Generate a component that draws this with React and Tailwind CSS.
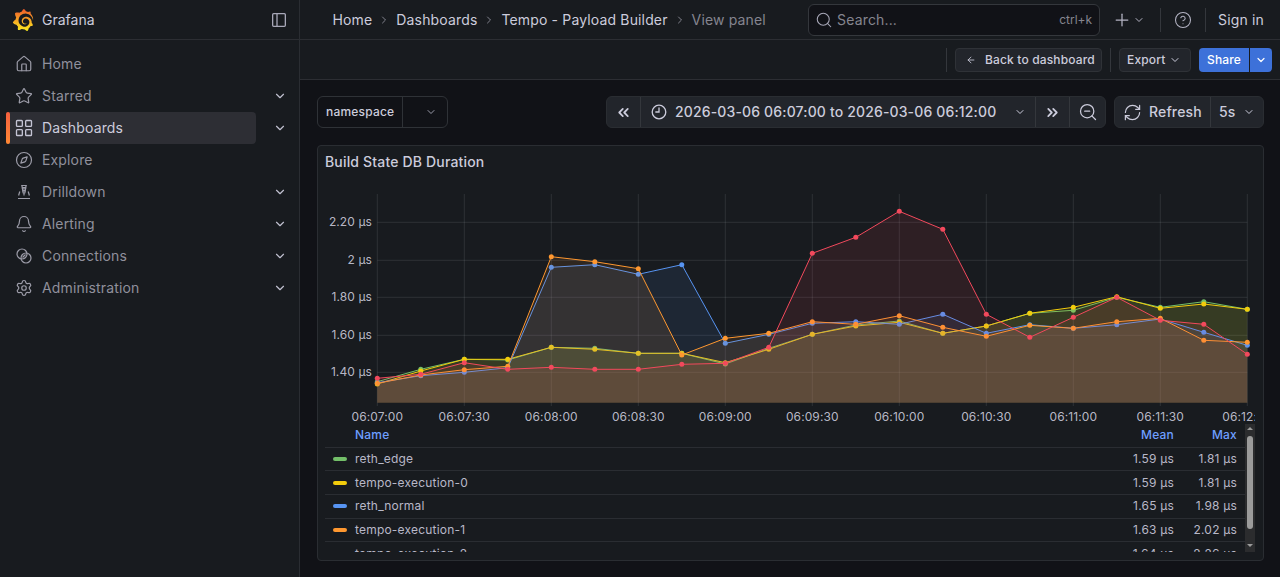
import React from "react";
import { SiGrafana } from "react-icons/si";
import { Home, Star, LayoutGrid, Compass, Bell, Settings, ChevronDown, ChevronRight, Search, Plus, CircleHelp, ArrowLeft, ChevronsLeft, ChevronsRight, ZoomOut, RefreshCw } from "lucide-react";

const data = [
  { c: "#73BF69", y: [381.7, 369.3, 359.3, 360, 347.3, 348.3, 353.3, 353.3, 364, 348.3, 334.3, 325, 321, 333.3, 326, 313.3, 310.3, 297.3, 307.3, 301.7, 309.3] },
  { c: "#F2CC0C", y: [384, 371, 359.3, 359.3, 347.3, 349.3, 353.3, 353.3, 362.7, 349.3, 334.3, 326, 322.3, 333.3, 326, 313.3, 307.3, 296.7, 308.3, 304, 309.3] },
  { c: "#5794F2", y: [382.7, 375.7, 372.3, 367.7, 267.3, 264.7, 274.3, 264.7, 343.3, 334.3, 323.3, 321.7, 324.3, 314.3, 333.3, 324.7, 328.3, 324.7, 319, 332.3, 345.3] },
  { c: "#FF9830", y: [383.3, 375, 369.7, 366.3, 256.7, 261.7, 268.7, 355, 338.3, 333.3, 321.7, 324.3, 315.7, 327.3, 336.3, 325.3, 328.3, 321.7, 318.3, 340.3, 342.3] },
  { c: "#F2495C", y: [378.3, 374.3, 362.7, 369.3, 367.3, 369.3, 369.3, 364.3, 363.3, 347.3, 253.3, 237.3, 211.3, 229.3, 314.3, 337.3, 317.3, 297.3, 320.3, 324.3, 354.3] },
];
const X0 = 377.3, STEP = 43.5, BASE = 402.7;
const xAt = (i) => X0 + i * STEP;
const yTicks = [["2.20 µs", 222.3], ["2 µs", 260.3], ["1.80 µs", 297.3], ["1.60 µs", 335.3], ["1.40 µs", 372.3]];
const xTicks = ["06:07:00", "06:07:30", "06:08:00", "06:08:30", "06:09:00", "06:09:30", "06:10:00", "06:10:30", "06:11:00", "06:11:30", "06:12:00"];

function Chart() {
  return (
    <svg width="937" height="245" viewBox="318 179 937 245" className="block shrink-0" style={{ fontFamily: "Inter, sans-serif", letterSpacing: "0.1px" }}>
      {yTicks.map(([t, y]) => (
        <g key={t}>
          <line x1={X0} x2={xAt(20)} y1={y} y2={y} stroke="rgba(240,250,255,0.1)" />
          <text x="372" y={y + 4} textAnchor="end" fontSize="12" fill="#ccccdc" fillOpacity="0.9">{t}</text>
        </g>
      ))}
      {xTicks.map((t, i) => (
        <g key={t}>
          <line x1={xAt(i * 2)} x2={xAt(i * 2)} y1="194" y2="406" stroke="rgba(240,250,255,0.1)" />
          <text x={xAt(i * 2)} y="420.5" textAnchor="middle" fontSize="12" fill="#ccccdc" fillOpacity="0.9">{t}</text>
        </g>
      ))}
      {data.map((s) => {
        const pts = s.y.map((y, i) => `${xAt(i)},${y}`).join(" ");
        return (
          <g key={s.c}>
            <polygon points={`${X0},${BASE} ${pts} ${xAt(20)},${BASE}`} fill={s.c} fillOpacity="0.1" />
            <polyline points={pts} fill="none" stroke={s.c} strokeWidth="1" />
            {s.y.map((y, i) => <circle key={i} cx={xAt(i)} cy={y} r="2.5" fill={s.c} />)}
          </g>
        );
      })}
    </svg>
  );
}

const DrillIcon = (p) => (
  <svg viewBox="0 0 16 16" width="16" height="16" fill="none" stroke="currentColor" strokeWidth="1.1" {...p}>
    <path d="M5.8 1.5h4.4l-.5 2H6.3zM6.2 4.2h3.6l-.5 2H6.7zM6.7 7h2.6l-.5 2H7.2zM8 9v2.6" />
    <path d="M3.8 7.5 2.6 11.5M12.2 7.5l1.2 4M2 14.5h12" />
  </svg>
);
const ConnIcon = (p) => (
  <svg viewBox="0 0 16 16" width="16" height="16" fill="none" stroke="currentColor" strokeWidth="1.2" {...p}>
    <circle cx="6" cy="6" r="5" />
    <circle cx="10" cy="10" r="5" />
    <path d="M6.5 9.5 9.5 6.5" />
  </svg>
);
const ClockIcon = (p) => (
  <svg viewBox="0 0 16 16" width="16" height="16" fill="none" stroke="currentColor" strokeWidth="1.3" strokeLinecap="round" {...p}>
    <circle cx="8" cy="8" r="6.8" />
    <path d="M8 4v4H4.8" />
  </svg>
);
const PanelIcon = (p) => (
  <svg viewBox="0 0 16 16" width="16" height="16" fill="none" stroke="currentColor" strokeWidth="1.3" {...p}>
    <rect x="1.65" y="1.65" width="12.7" height="12.7" rx="1" />
    <path d="M6 1.65v12.7" />
  </svg>
);

const nav = [
  ["Home", Home, false, false, 18],
  ["Starred", Star, true, false, 18],
  ["Dashboards", LayoutGrid, true, true, 20],
  ["Explore", Compass, false, false, 18],
  ["Drilldown", DrillIcon, true, false, 16],
  ["Alerting", Bell, true, false, 18],
  ["Connections", ConnIcon, true, false, 16],
  ["Administration", Settings, true, false, 18],
];

function Sidebar() {
  return (
    <aside className="w-[300px] shrink-0 bg-[#181b1f] border-r border-[#2a2d32] flex flex-col">
      <div className="h-10 shrink-0 border-b border-[#2c2e33] flex items-center pl-[12px] pr-[12px]">
        <svg width="0" height="0" className="absolute">
          <defs>
            <linearGradient id="gf" x1="0" y1="1" x2="0" y2="0">
              <stop offset="0" stopColor="#FCEE1F" />
              <stop offset="1" stopColor="#F15B2A" />
            </linearGradient>
          </defs>
        </svg>
        <SiGrafana size={22} fill="url(#gf)" style={{ fill: "url(#gf)", color: "transparent" }} />
        <span className="ml-2 text-sm text-[#ccccdc] flex-1">Grafana</span>
        <PanelIcon className="text-[#a8a8b8]" />
      </div>
      <nav className="pt-2 flex flex-col">
        {nav.map(([name, Icon, chev, active, size]) => (
          <div key={name} className="h-8 flex items-center relative pl-[16px]">
            {active && <div className="absolute left-[6px] top-0 h-8 w-[250px] rounded bg-[#2d2e34]" />}
            {active && <div className="absolute left-[6px] top-0 h-8 w-1 rounded-sm bg-gradient-to-b from-[#f55f3e] to-[#ff8833]" />}
            <span className={`relative w-4 h-4 flex items-center justify-center ${active ? "text-[#c4c4d4]" : "text-[#9c9ca8]"}`}>
              <Icon size={size} width={size} height={size} strokeWidth={name === "Drilldown" || name === "Connections" ? 1.2 : 1.6} className="shrink-0" />
            </span>
            <span className={`relative ml-[10px] text-sm tracking-[0.15px] ${active ? "text-[#ccccdc]" : "text-[#90909c]"}`}>{name}</span>
            {chev && <ChevronDown size={14} strokeWidth={2} className="absolute left-[273px] text-[#c0c0d0]" />}
          </div>
        ))}
      </nav>
    </aside>
  );
}

function TopBar() {
  const crumbs = ["Home", "Dashboards", "Tempo - Payload Builder"];
  return (
    <div className="h-10 shrink-0 bg-[#181b1f] border-b border-[#2c2e33] flex items-center pl-[32.5px] pr-4 tracking-[0.15px]">
      <div className="flex items-center text-sm text-[#ccccdc] flex-1">
        {crumbs.map((c) => (
          <React.Fragment key={c}>
            <span>{c}</span>
            <ChevronRight size={12} strokeWidth={1.6} className="mx-[6px] text-[#9c9ca8]" />
          </React.Fragment>
        ))}
        <span className="text-[#85858f]">View panel</span>
      </div>
      <div className="w-[292px] h-8 rounded-md border border-[#34373c] bg-[#111217] flex items-center pl-[6px] pr-[7px] text-sm">
        <Search size={18} strokeWidth={1.4} className="text-[#a8a8b8]" />
        <span className="ml-1 text-[#85858f] flex-1">Search...</span>
        <span className="text-xs tracking-normal text-[#85858f]">ctrl+k</span>
      </div>
      <Plus size={20} strokeWidth={1.5} className="ml-[12px] text-[#b4b4c4]" />
      <ChevronDown size={12} strokeWidth={2} className="ml-px text-[#b4b4c4]" />
      <div className="w-px h-6 bg-[#34373c] ml-[15px]" />
      <CircleHelp size={18} strokeWidth={1.4} className="ml-[13px] text-[#b4b4c4]" />
      <div className="w-px h-6 bg-[#34373c] ml-[13px]" />
      <span className="ml-[12px] text-sm text-[#ccccdc]">Sign in</span>
    </div>
  );
}

function ActionBar() {
  return (
    <div className="h-10 shrink-0 bg-[#181b1f] border-b border-[#2c2e33] flex items-center justify-end pr-2 text-xs font-medium tracking-[0.15px] text-[#ccccdc]">
      <div className="w-px h-6 bg-[#34373c] mr-2" />
      <div className="h-6 w-[147px] rounded bg-[#22252b] border border-[#2f3237] flex items-center pl-[10px]">
        <ArrowLeft size={10} strokeWidth={2} />
        <span className="ml-[9px]">Back to dashboard</span>
      </div>
      <div className="w-px h-6 bg-[#34373c] mx-2" />
      <div className="h-6 w-[72px] rounded bg-[#22252b] border border-[#2f3237] flex items-center pl-[7px]">
        <span>Export</span>
        <ChevronDown size={12} strokeWidth={2} className="ml-[4px]" />
      </div>
      <div className="h-6 ml-2 flex text-white">
        <div className="w-[50px] rounded-l bg-[#3d71d9] flex items-center justify-center">Share</div>
        <div className="w-[22px] ml-px rounded-r bg-[#3d71d9] flex items-center justify-center">
          <ChevronDown size={12} strokeWidth={2.4} />
        </div>
      </div>
    </div>
  );
}

function Controls() {
  return (
    <div className="flex items-center h-8 text-sm tracking-[0.15px] text-[#ccccdc]">
      <div className="flex h-8 w-[131px] rounded-md border border-[#2f3237] bg-[#111217]">
        <div className="w-[85px] shrink-0 border-r border-[#2f3237] flex items-center pl-2 text-xs font-medium tracking-[0.2px]">namespace</div>
        <div className="flex-1 flex items-center pl-[22px]">
          <ChevronDown size={12} strokeWidth={1.8} className="text-[#a8a8b8]" />
        </div>
      </div>
      <div className="ml-[158px] flex h-8 rounded-md bg-[#22252b] border border-[#2a2d32] font-medium">
        <div className="w-[34px] flex items-center justify-center border-r border-[#34373c]"><ChevronsLeft size={17} strokeWidth={2.5} /></div>
        <div className="w-[395px] flex items-center pl-[10px] border-r border-[#34373c]">
          <ClockIcon />
          <span className="ml-[8px] flex-1">2026-03-06 06:07:00 to 2026-03-06 06:12:00</span>
          <ChevronDown size={12} strokeWidth={2} className="mr-[9px]" />
        </div>
        <div className="w-[34px] flex items-center justify-center border-r border-[#34373c]"><ChevronsRight size={17} strokeWidth={2.5} /></div>
        <div className="w-[35px] flex items-center justify-center"><ZoomOut size={20} strokeWidth={1.5} /></div>
      </div>
      <div className="ml-2 flex h-8 w-[150px] rounded-md bg-[#22252b] border border-[#2a2d32] font-medium">
        <div className="w-[96px] flex items-center pl-[8px] border-r border-[#34373c]">
          <RefreshCw size={19} strokeWidth={1.5} />
          <span className="ml-[7px]">Refresh</span>
        </div>
        <div className="flex-1 flex items-center pl-2">
          <span>5s</span>
          <ChevronDown size={12} strokeWidth={2} className="ml-[7px]" />
        </div>
      </div>
    </div>
  );
}

const rows = [
  ["reth_edge", "#73BF69", "1.59 µs", "1.81 µs"],
  ["tempo-execution-0", "#F2CC0C", "1.59 µs", "1.81 µs"],
  ["reth_normal", "#5794F2", "1.65 µs", "1.98 µs"],
  ["tempo-execution-1", "#FF9830", "1.63 µs", "2.02 µs"],
  ["tempo-execution-2", "#F2495C", "1.64 µs", "2.26 µs"],
];

function Legend() {
  return (
    <div className="flex h-[128px] pl-[7px] pr-2 overflow-hidden shrink-0">
      <div className="flex-1 text-xs tracking-[0.2px] min-w-0 overflow-hidden">
        <div className="h-[23.6px] pb-px flex items-center pl-[30px] pr-[8px] text-[#6e9fff] font-medium border-b border-[#2a2d32]">
          <span className="flex-1">Name</span>
          <span className="w-[60px] text-right">Mean</span>
          <span className="w-[63px] text-right">Max</span>
        </div>
        {rows.map(([n, c, a, b]) => (
          <div key={n} className="h-[23.67px] flex items-center pl-2 pr-[8px] text-[#b8b8c8] border-b border-[#2a2d32]">
            <span className="w-[14px] h-1 rounded-sm mr-2" style={{ backgroundColor: c }} />
            <span className="flex-1">{n}</span>
            <span className="w-[60px] text-right">{a}</span>
            <span className="w-[63px] text-right">{b}</span>
          </div>
        ))}
      </div>
      <div className="w-[10px] shrink-0 bg-[#2b2c2e] flex flex-col items-center">
        <div className="mt-[3px] w-0 h-0 border-x-[3px] border-x-transparent border-b-[3px] border-b-[#9b9b9b]" />
        <div className="mt-[6px] w-[6px] h-[93px] rounded-sm bg-[#9b9b9b]" />
        <div className="mt-[15px] w-0 h-0 border-x-[3px] border-x-transparent border-t-[3px] border-t-[#9b9b9b]" />
      </div>
    </div>
  );
}

function Panel() {
  return (
    <div className="mt-[17px] h-[416px] w-[947px] rounded border border-[#2a2d32] bg-[#181b1f] flex flex-col">
      <div className="h-[33px] pb-[2px] shrink-0 flex items-center pl-[7px] text-sm tracking-[0.17px] font-medium text-[#ccccdc]">Build State DB Duration</div>
      <Chart />
      <Legend />
    </div>
  );
}

export default function App() {
  return (
    <div className="w-[1280px] h-[577px] overflow-hidden flex bg-[#111217]" style={{ fontFamily: "Inter, 'Liberation Sans', sans-serif" }}>
      <Sidebar />
      <main className="flex-1 min-w-0 flex flex-col">
        <TopBar />
        <ActionBar />
        <div className="pl-[17px] pt-4 flex flex-col">
          <Controls />
          <Panel />
        </div>
      </main>
    </div>
  );
}
